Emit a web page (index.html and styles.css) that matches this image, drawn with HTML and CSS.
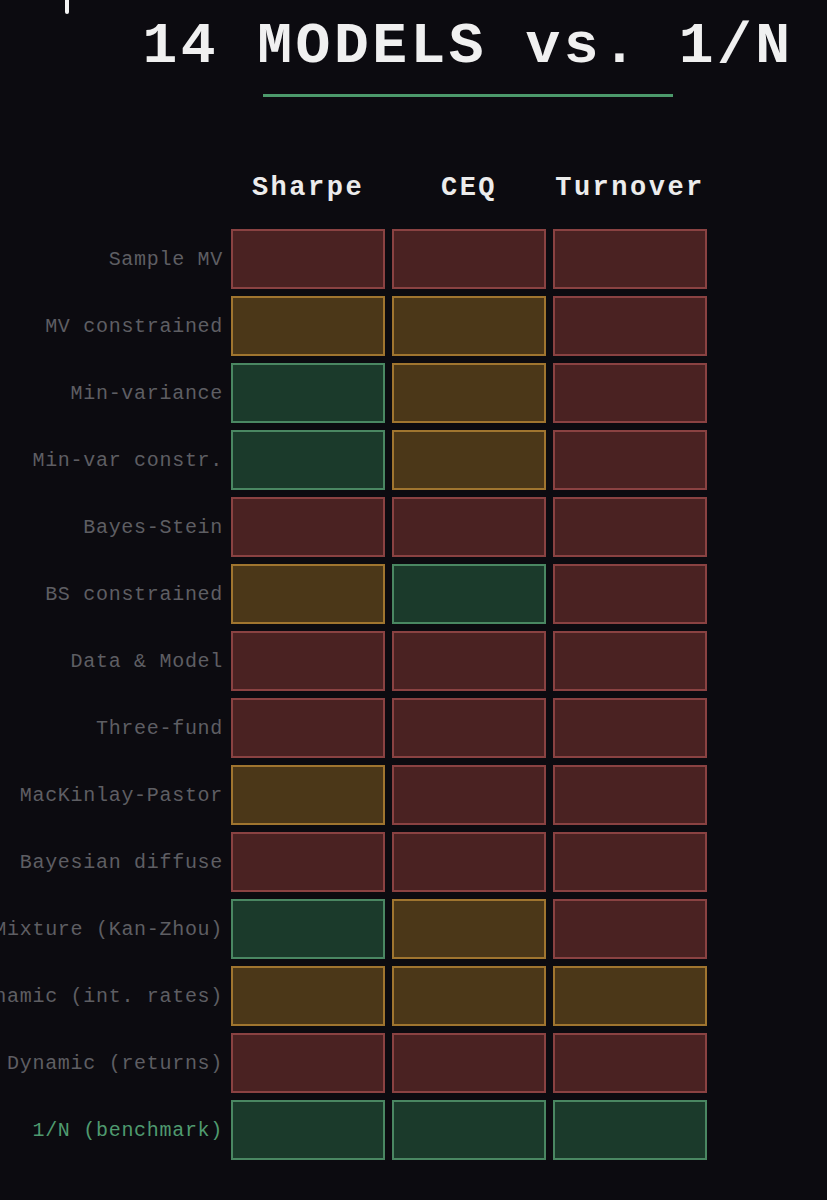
FILE: index.html
```html
<!DOCTYPE html>
<html lang="en">
<head>
<meta charset="utf-8">
<title>14 Models vs. 1/N</title>
<link rel="stylesheet" href="styles.css">
</head>
<body>
<div class="cursor"></div>
<header class="hero">
  <h1 class="title">14 MODELS vs. 1/N</h1>
  <div class="rule"></div>
</header>
<main class="chart">
  <div class="heads">
    <span></span>
    <span class="head">Sharpe</span>
    <span class="head">CEQ</span>
    <span class="head">Turnover</span>
  </div>
  <div class="board">
    <div class="label"><span>Sample MV</span></div>
    <div class="cell red"></div><div class="cell red"></div><div class="cell red"></div>

    <div class="label"><span>MV constrained</span></div>
    <div class="cell amber"></div><div class="cell amber"></div><div class="cell red"></div>

    <div class="label"><span>Min-variance</span></div>
    <div class="cell green"></div><div class="cell amber"></div><div class="cell red"></div>

    <div class="label"><span>Min-var constr.</span></div>
    <div class="cell green"></div><div class="cell amber"></div><div class="cell red"></div>

    <div class="label"><span>Bayes-Stein</span></div>
    <div class="cell red"></div><div class="cell red"></div><div class="cell red"></div>

    <div class="label"><span>BS constrained</span></div>
    <div class="cell amber"></div><div class="cell green"></div><div class="cell red"></div>

    <div class="label"><span>Data &amp; Model</span></div>
    <div class="cell red"></div><div class="cell red"></div><div class="cell red"></div>

    <div class="label"><span>Three-fund</span></div>
    <div class="cell red"></div><div class="cell red"></div><div class="cell red"></div>

    <div class="label"><span>MacKinlay-Pastor</span></div>
    <div class="cell amber"></div><div class="cell red"></div><div class="cell red"></div>

    <div class="label"><span>Bayesian diffuse</span></div>
    <div class="cell red"></div><div class="cell red"></div><div class="cell red"></div>

    <div class="label"><span>Mixture (Kan-Zhou)</span></div>
    <div class="cell green"></div><div class="cell amber"></div><div class="cell red"></div>

    <div class="label"><span>Dynamic (int. rates)</span></div>
    <div class="cell amber"></div><div class="cell amber"></div><div class="cell amber"></div>

    <div class="label"><span>Dynamic (returns)</span></div>
    <div class="cell red"></div><div class="cell red"></div><div class="cell red"></div>

    <div class="label bench"><span>1/N (benchmark)</span></div>
    <div class="cell green"></div><div class="cell green"></div><div class="cell green"></div>
  </div>
</main>
</body>
</html>
```
FILE: styles.css
```css
html, body {
  margin: 0;
  padding: 0;
}
body {
  background: #0c0b10;
  font-family: "Liberation Mono", "Courier New", monospace;
  overflow: hidden;
  position: relative;
  min-height: 1200px;
}
.cursor {
  position: absolute;
  left: 65px;
  top: 0;
  width: 4px;
  height: 14px;
  background: #f4f4f4;
  border-radius: 0 0 2px 2px;
}
.hero {
  margin-left: 140px;
  width: 656px;
  padding-top: 18px;
  display: flex;
  flex-direction: column;
  align-items: center;
}
.title {
  margin: 0;
  font-size: 58px;
  line-height: 58px;
  font-weight: 700;
  letter-spacing: 3.5px;
  color: #f0f0f0;
  white-space: nowrap;
}
.rule {
  margin-top: 18px;
  width: 410px;
  height: 3px;
  background: #4c9a6b;
}
.heads,
.board {
  display: grid;
  grid-template-columns: 224px repeat(3, 154px);
  column-gap: 7px;
}
.heads {
  margin-top: 77px;
  height: 28px;
}
.head {
  text-align: center;
  font-size: 27px;
  line-height: 28px;
  font-weight: 700;
  letter-spacing: 2.5px;
  color: #ececec;
}
.board {
  margin-top: 27px;
  grid-auto-rows: 60px;
  row-gap: 7px;
}
.label {
  display: flex;
  justify-content: flex-end;
  align-items: center;
  white-space: nowrap;
  font-size: 20px;
  letter-spacing: 0.7px;
  color: #5e5e63;
  padding-right: 1px;
}
.label.bench {
  color: #4f9a6f;
}
.cell {
  box-sizing: border-box;
  border: 2px solid;
}
.red {
  background: #4a2222;
  border-color: #8a4242;
}
.amber {
  background: #4b3718;
  border-color: #a0752f;
}
.green {
  background: #1b3a2b;
  border-color: #4a8762;
}
```
